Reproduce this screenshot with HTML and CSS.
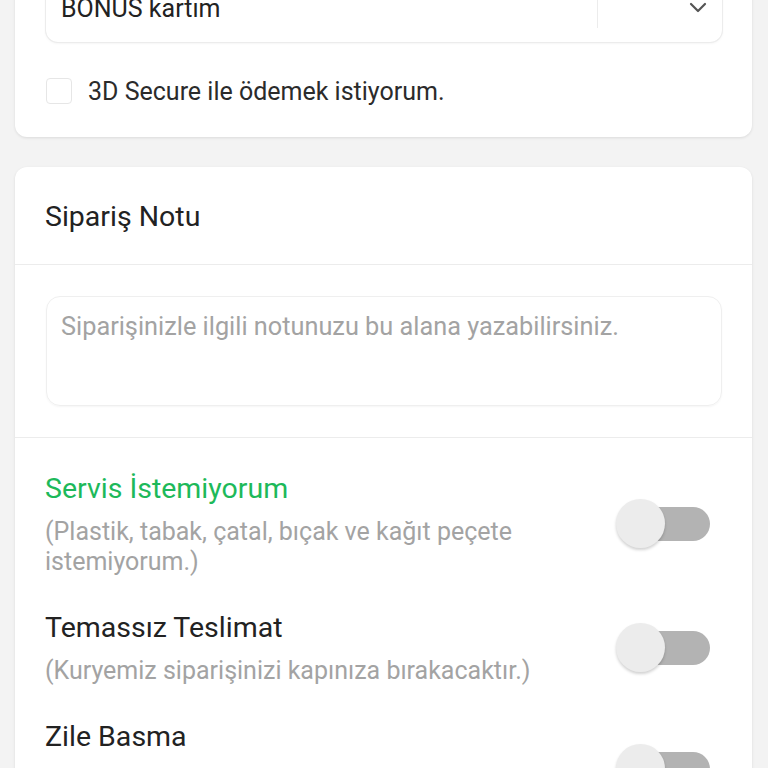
FILE: index.html
```html
<!DOCTYPE html>
<html lang="tr">
<head>
<meta charset="utf-8">
<link rel="stylesheet" href="styles.css">
</head>
<body>
<div class="page">
  <section class="card card-pay">
    <div class="select">
      <span class="select-text">BONUS kartım</span>
      <span class="select-sep"></span>
      <span class="select-arrow">
        <svg width="18" height="12" viewBox="0 0 18 12"><path d="M2 2 L9 9 L16 2" fill="none" stroke="#555" stroke-width="2.2" stroke-linecap="round" stroke-linejoin="round"/></svg>
      </span>
    </div>
    <label class="check-row">
      <span class="checkbox"></span>
      <span class="check-label">3D Secure ile ödemek istiyorum.</span>
    </label>
  </section>

  <section class="card card-note">
    <div class="card-head">Sipariş Notu</div>
    <div class="note-wrap">
      <div class="note-box">Siparişinizle ilgili notunuzu bu alana yazabilirsiniz.</div>
    </div>
    <div class="options">
      <div class="option">
        <div class="option-text">
          <div class="option-title green">Servis İstemiyorum</div>
          <div class="option-sub">(Plastik, tabak, çatal, bıçak ve kağıt peçete istemiyorum.)</div>
        </div>
        <div class="toggle"><span class="track"></span><span class="knob"></span></div>
      </div>
      <div class="option">
        <div class="option-text">
          <div class="option-title">Temassız Teslimat</div>
          <div class="option-sub">(Kuryemiz siparişinizi kapınıza bırakacaktır.)</div>
        </div>
        <div class="toggle"><span class="track"></span><span class="knob"></span></div>
      </div>
      <div class="option">
        <div class="option-text">
          <div class="option-title">Zile Basma</div>
          <div class="option-sub last-sub">(Kuryemiz zile basmayacaktır.)</div>
        </div>
        <div class="toggle"><span class="track"></span><span class="knob"></span></div>
      </div>
    </div>
  </section>
</div>
</body>
</html>
```
FILE: styles.css
```css
html, body {
  margin: 0;
  padding: 0;
  background: #f3f3f3;
  font-family: Roboto, "Noto Sans", Arial, sans-serif;
  color: #2b2b2b;
  overflow: hidden;
}
.page {
  padding: 0 16px 0 15px;
  display: flex;
  flex-direction: column;
  gap: 30px;
}
.card {
  background: #fff;
  border-radius: 12px;
  box-shadow: 0 1px 3px rgba(0,0,0,0.10);
}
.card-pay {
  margin-top: -44px;
  padding: 22px 30px 33px 31px;
  display: flex;
  flex-direction: column;
  gap: 36px;
}
.select {
  height: 64px;
  border-radius: 12px;
  box-shadow: 0 0 0 1px #ececec, 0 1px 3px rgba(0,0,0,0.08);
  display: flex;
  align-items: center;
  padding-left: 15px;
}
.select-text {
  flex: 1;
  font-size: 25px;
  color: #222;
  margin-top: -4px;
}
.select-sep {
  width: 1px;
  align-self: stretch;
  margin: 0 0 14px;
  background: #ececec;
}
.select-arrow {
  width: 124px;
  display: flex;
  justify-content: flex-end;
  padding-right: 15px;
  box-sizing: border-box;
  margin-top: -4px;
}
.check-row {
  display: flex;
  align-items: center;
  gap: 16px;
  height: 26px;
}
.checkbox {
  width: 26px;
  height: 26px;
  border-radius: 4px;
  border: 1px solid #e6e6e6;
  box-sizing: border-box;
}
.check-label {
  font-size: 25px;
  color: #2b2b2b;
}
.card-note {
  display: flex;
  flex-direction: column;
}
.card-head {
  font-size: 28.5px;
  line-height: 30px;
  padding: 35px 30px 32px 30px;
  border-bottom: 1px solid #ececec;
  color: #222;
}
.note-wrap {
  padding: 31px 30px 31px 31px;
  border-bottom: 1px solid #ececec;
}
.note-box {
  height: 110px;
  box-sizing: border-box;
  border-radius: 14px;
  border: 1px solid #efefef;
  box-shadow: 0 1px 2px rgba(0,0,0,0.04);
  padding: 15px 14px;
  font-size: 25.3px;
  line-height: 30px;
  color: #a3a3a3;
}
.options {
  padding: 36px 30px 0 30px;
  display: flex;
  flex-direction: column;
  gap: 36px;
}
.option {
  display: flex;
  align-items: center;
}
.option-text {
  flex: 1;
  display: flex;
  flex-direction: column;
  gap: 13px;
}
.option-title {
  font-size: 28.5px;
  line-height: 30px;
  color: #222;
}
.option-title.green {
  color: #1db95a;
}
.option-sub {
  font-size: 25px;
  line-height: 30px;
  color: #a3a3a3;
  max-width: 490px;
}
.option-sub.last-sub {
  margin-top: 24px;
}
.toggle {
  width: 94px;
  height: 50px;
  margin-right: 12px;
  margin-left: 40px;
  position: relative;
  flex-shrink: 0;
  top: -2px;
}
.track {
  position: absolute;
  left: 12px;
  right: 0;
  top: 8px;
  height: 34px;
  border-radius: 17px;
  background: #b3b3b3;
}
.knob {
  position: absolute;
  left: 0;
  top: 0;
  width: 49px;
  height: 49px;
  border-radius: 50%;
  background: #ececec;
  box-shadow: 0 2px 3px rgba(0,0,0,0.18);
}
```
